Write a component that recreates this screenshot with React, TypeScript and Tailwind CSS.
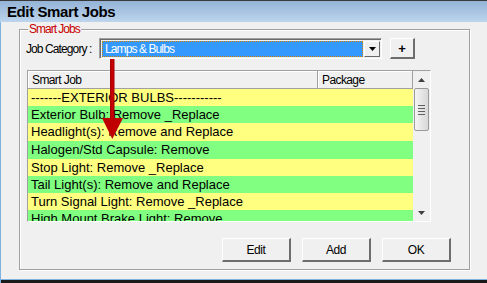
import React from "react";

const rows = [
  "-------EXTERIOR BULBS-----------",
  "Exterior Bulb: Remove _Replace",
  "Headlight(s): Remove and Replace",
  "Halogen/Std Capsule: Remove",
  "Stop Light: Remove _Replace",
  "Tail Light(s): Remove and Replace",
  "Turn Signal Light: Remove _Replace",
  "High Mount Brake Light: Remove",
];
const heights = ["h-[17px]", "h-[17px]", "h-[18px]", "h-[18px]", "h-[17px]", "h-[17px]", "h-[17px]", "h-[17px]"];

function Btn({ label }: { label: string }) {
  return (
    <div className="w-[69px] h-[24px] flex items-center justify-center bg-[#f0f0f0] border-t border-l border-white border-b-2 border-r-2 border-b-[#6d6d6d] border-r-[#6d6d6d] text-[12px] tracking-[-0.4px] text-black">
      {label}
    </div>
  );
}

export default function App() {
  return (
    <div
      className="relative w-[487px] h-[283px] overflow-hidden bg-[#f0f0f0] flex flex-col"
      style={{ fontFamily: '"Liberation Sans", Arial, sans-serif' }}
    >
      {/* title bar */}
      <div className="h-[22px] shrink-0 border-t border-[#3a3a3a] bg-gradient-to-b from-[#94b3d6] to-[#bdd5ed] flex items-center pl-[7px]">
        <span className="text-[15px] font-bold text-black leading-none tracking-[-0.4px]">Edit Smart Jobs</span>
      </div>
      {/* body */}
      <div className="flex-1 flex flex-col border-l border-[#7fb2e0]">
        <div className="pl-[18px] pt-[7px]">
          {/* group box */}
          <div className="relative w-[451px] h-[241px] border border-[#a0a0a0] shadow-[inset_1px_1px_0_#ffffff,1px_1px_0_#ffffff]">
            <span className="absolute left-[8px] top-[-7px] px-[1px] bg-[#f0f0f0] text-[12px] leading-[13px] tracking-[-1px] text-[#c80000]">
              Smart Jobs
            </span>
            <div className="flex flex-col pl-[6px] pt-[8px]">
              {/* job category row */}
              <div className="flex items-center h-[21px]">
                <span className="text-[12px] text-black w-[73px] whitespace-nowrap tracking-[-0.9px]">
                  Job Category :
                </span>
                <div className="w-[283px] h-[21px] border-t border-l border-[#a0a0a0] border-b border-r border-b-white border-r-white flex">
                  <div className="flex-1 border-t border-l border-[#696969] flex p-[1px]">
                    <div className="flex-1 bg-[#3399ff] border border-dotted border-[#d08000] flex items-center pl-[2px] text-[12px] tracking-[-0.9px] text-white leading-none">
                      Lamps &amp; Bulbs
                    </div>
                    <div className="w-[16px] ml-[1px] bg-[#f0f0f0] border-t border-l border-white border-b border-r border-b-[#696969] border-r-[#696969] flex items-center justify-center">
                      <svg width="7" height="4" viewBox="0 0 7 4">
                        <path d="M0 0H7L3.5 4Z" fill="#000" />
                      </svg>
                    </div>
                  </div>
                </div>
                <div className="ml-[8px] w-[25px] h-[21px] bg-[#f0f0f0] border-t border-l border-white border-b-2 border-r-2 border-b-[#6d6d6d] border-r-[#6d6d6d] flex items-center justify-center text-[13px] font-bold leading-none">
                  +
                </div>
              </div>
              {/* list view */}
              <div className="mt-[11px] ml-[1px] w-[404px] h-[152px] border-t border-l border-[#a0a0a0] border-b border-r border-b-white border-r-white flex">
                <div className="flex-1 flex flex-col overflow-hidden">
                  <div className="h-[18px] shrink-0 flex border-b border-[#a0a0a0] bg-[#f0f0f0] text-[12px] tracking-[-0.6px] text-black">
                    <div className="w-[290px] pl-[4px] flex items-center border-r border-[#a0a0a0] shadow-[inset_1px_1px_0_#ffffff]">
                      Smart Job
                    </div>
                    <div className="flex-1 pl-[4px] flex items-center border-r border-[#a0a0a0] shadow-[inset_1px_1px_0_#ffffff]">
                      Package
                    </div>
                  </div>
                  <div className="flex flex-col">
                    {rows.map((r, i) => (
                      <div
                        key={i}
                        className={
                          heights[i] +
                          " shrink-0 flex items-center pl-[3px] text-[13px] text-black whitespace-nowrap " +
                          (i % 2 === 0 ? "bg-[#ffff80]" : "bg-[#80ff80]")
                        }
                      >
                        {r}
                      </div>
                    ))}
                  </div>
                </div>
                {/* scrollbar */}
                <div className="w-[17px] shrink-0 bg-[#f0f0f0] flex flex-col items-center">
                  <div className="h-[17px] w-full flex items-center justify-center">
                    <svg width="7" height="4" viewBox="0 0 7 4">
                      <path d="M3.5 0L7 4H0Z" fill="#404040" />
                    </svg>
                  </div>
                  <div className="w-[15px] h-[43px] rounded-[2px] border border-[#9a9a9a] bg-gradient-to-r from-[#f4f4f4] via-[#e6e6e6] to-[#d8d8d8] flex flex-col items-center justify-center gap-[2px]">
                    <div className="w-[7px] h-[1px] bg-[#606060]" />
                    <div className="w-[7px] h-[1px] bg-[#606060]" />
                    <div className="w-[7px] h-[1px] bg-[#606060]" />
                    <div className="w-[7px] h-[1px] bg-[#606060]" />
                  </div>
                  <div className="flex-1" />
                  <div className="h-[17px] w-full flex items-center justify-center">
                    <svg width="7" height="4" viewBox="0 0 7 4">
                      <path d="M0 0H7L3.5 4Z" fill="#404040" />
                    </svg>
                  </div>
                </div>
              </div>
              {/* buttons */}
              <div className="mt-[16px] flex gap-[11px] pl-[196px]">
                <Btn label="Edit" />
                <Btn label="Add" />
                <Btn label="OK" />
              </div>
            </div>
          </div>
        </div>
        <div className="flex-1" />
        <div className="h-[1px] bg-[#7fb2e0]" />
        <div className="h-[3px] bg-[#1a1a1a]" />
      </div>
      {/* red arrow overlay */}
      <svg className="absolute left-0 top-0 pointer-events-none" width="487" height="283">
        <defs>
          <linearGradient id="ar" x1="0" x2="1" y1="0" y2="0">
            <stop offset="0" stopColor="#a00000" />
            <stop offset="0.5" stopColor="#d00000" />
            <stop offset="1" stopColor="#a00000" />
          </linearGradient>
        </defs>
        <rect x="110" y="59" width="4.5" height="60" fill="url(#ar)" />
        <path d="M102 118H123L112.3 139Z" fill="#c00000" />
      </svg>
    </div>
  );
}
